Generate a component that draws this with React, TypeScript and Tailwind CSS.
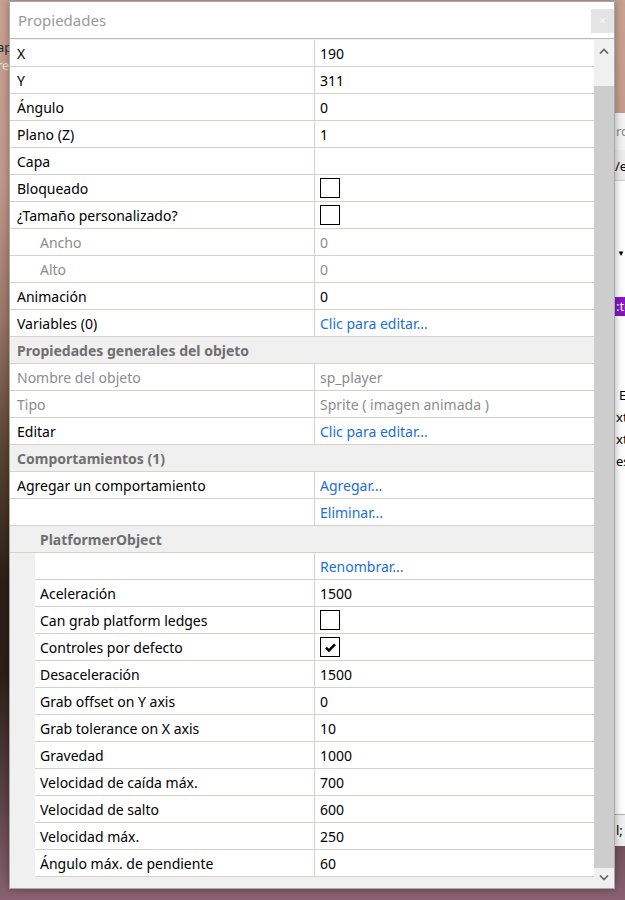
import type { ReactNode } from "react"

type Row =
  | { kind: "row"; label: string; value?: ReactNode; muted?: boolean; indent?: boolean }
  | { kind: "header"; label: string }

const link = (t: string) => <span className="text-[#1a6fd6]">{t}</span>

function Check({ on = false }: { on?: boolean }) {
  return (
    <span className="flex h-[20px] w-[20px] items-center justify-center border border-black bg-white">
      {on && (
        <svg width="11" height="9" viewBox="0 0 12 10">
          <path d="M1 5.2 L4.2 8.4 L11 1.6" fill="none" stroke="#000" strokeWidth="2.8" />
        </svg>
      )}
    </span>
  )
}

const mainRows: Row[] = [
  { kind: "row", label: "X", value: "190" },
  { kind: "row", label: "Y", value: "311" },
  { kind: "row", label: "Ángulo", value: "0" },
  { kind: "row", label: "Plano (Z)", value: "1" },
  { kind: "row", label: "Capa" },
  { kind: "row", label: "Bloqueado", value: <Check /> },
  { kind: "row", label: "¿Tamaño personalizado?", value: <Check /> },
  { kind: "row", label: "Ancho", value: "0", muted: true, indent: true },
  { kind: "row", label: "Alto", value: "0", muted: true, indent: true },
  { kind: "row", label: "Animación", value: "0" },
  { kind: "row", label: "Variables (0)", value: link("Clic para editar...") },
  { kind: "header", label: "Propiedades generales del objeto" },
  { kind: "row", label: "Nombre del objeto", value: "sp_player", muted: true },
  { kind: "row", label: "Tipo", value: "Sprite ( imagen animada )", muted: true },
  { kind: "row", label: "Editar", value: link("Clic para editar...") },
  { kind: "header", label: "Comportamientos (1)" },
  { kind: "row", label: "Agregar un comportamiento", value: link("Agregar...") },
  { kind: "row", label: "", value: link("Eliminar...") },
]

const behaviorRows: Row[] = [
  { kind: "row", label: "", value: link("Renombrar...") },
  { kind: "row", label: "Aceleración", value: "1500" },
  { kind: "row", label: "Can grab platform ledges", value: <Check /> },
  { kind: "row", label: "Controles por defecto", value: <Check on /> },
  { kind: "row", label: "Desaceleración", value: "1500" },
  { kind: "row", label: "Grab offset on Y axis", value: "0" },
  { kind: "row", label: "Grab tolerance on X axis", value: "10" },
  { kind: "row", label: "Gravedad", value: "1000" },
  { kind: "row", label: "Velocidad de caída máx.", value: "700" },
  { kind: "row", label: "Velocidad de salto", value: "600" },
  { kind: "row", label: "Velocidad máx.", value: "250" },
  { kind: "row", label: "Ángulo máx. de pendiente", value: "60" },
]

function GridRow({ row, nested = false }: { row: Row; nested?: boolean }) {
  if (row.kind === "header") {
    return (
      <div className="flex h-[27px] items-center border-b border-[#d6d2ca] bg-[#f0f0f0] pl-[7px] font-bold text-[#6f6f6f]">
        {row.label}
      </div>
    )
  }
  return (
    <div className={`flex h-[27px] border-b border-[#d6d2ca] bg-white ${nested ? "ml-[25px]" : ""}`}>
      <div
        className={`flex shrink-0 items-center border-r border-[#d6d2ca] ${nested ? "w-[280px] pl-[5px]" : "w-[305px]"} ${
          row.indent ? "pl-[30px]" : nested ? "" : "pl-[7px]"
        } ${row.muted ? "text-[#8c8c8c]" : "text-black"}`}
      >
        {row.label}
      </div>
      <div className={`flex flex-1 items-center pl-[5px] ${row.muted ? "text-[#8c8c8c]" : "text-black"}`}>
        {row.value}
      </div>
    </div>
  )
}

function Chevron({ up }: { up?: boolean }) {
  return (
    <svg width="10" height="6" viewBox="0 0 10 6">
      <path d={up ? "M1 5.5 L5 1.5 L9 5.5" : "M1 0.5 L5 4.5 L9 0.5"} fill="none" stroke="#606060" strokeWidth="1.6" />
    </svg>
  )
}

export default function App() {
  return (
    <div className="relative h-[900px] w-[625px] overflow-hidden bg-[linear-gradient(180deg,#c9a291_0%,#c29a8c_20%,#9c7868_35%,#5a4430_50%,#2a2016_65%,#2c2018_75%,#5a4045_88%,#8a6272_100%)] font-['Segoe_UI','Noto_Sans',sans-serif] text-[14px]">
      {/* desktop window behind, left edge */}
      <div className="absolute -left-[3px] top-[40px] flex flex-col gap-[4px] text-[13px] leading-[14px]">
        <span className="text-[#1e2a3a]">ap</span>
        <span className="text-[#eee6e4]">re</span>
      </div>

      {/* window behind on the right */}
      <div className="absolute left-[600px] top-[113px] flex h-[733px] w-[40px] flex-col border-l border-[#a8a8a8] bg-white text-[13px]">
        <div className="flex h-[37px] items-center bg-[#f3f3f3] pl-[15px] text-[#8a8a8a]">rc</div>
        <div className="flex h-[31px] items-end border-b border-[#cfcfcf] bg-[#ececec] pb-[4px] pl-[14px] text-black">/e</div>
        <div className="flex h-[80px] items-end pb-[2px] pl-[16px] text-[8px] text-black">▼</div>
        <div className="ml-[14px] mt-[36px] flex h-[19px] w-[20px] items-center bg-[#8a14c8] pl-[1px] text-white">:to</div>
        <div className="mt-[68px] pl-[18px] leading-[22px] text-black">
          <div>E</div>
          <div className="-ml-[3px]">xt</div>
          <div className="-ml-[3px]">xt</div>
          <div className="-ml-[3px]">es</div>
        </div>
        <div className="mt-auto flex h-[32px] items-center border-t border-[#b0b0b0] bg-[#f0f0f0] pl-[15px] text-black">l;</div>
      </div>

      {/* properties window */}
      <div className="absolute left-[9px] top-[1px] flex h-[888px] w-[606px] flex-col border border-[#a9a9a9] bg-white shadow-[0_0_8px_rgba(0,0,0,0.35)]">
        <div className="relative flex h-[37px] shrink-0 items-center border-b border-[#bcbcbc] pl-[8px] text-[15px] text-[#9a9a9a]">
          Propiedades
          <div className="absolute right-0 top-[7px] flex h-[24px] w-[23px] items-center justify-center bg-[#e4e4e4] text-[13px] text-[#f8f8f8]">
            ×
          </div>
        </div>
        <div className="flex min-h-0 flex-1">
          <div className="flex w-[584px] flex-col bg-[#f0f0f0] pt-[1px]">
            {mainRows.map((r, i) => (
              <GridRow key={i} row={r} />
            ))}
            <div className="flex h-[27px] items-center border-b border-[#d6d2ca] bg-[#f0f0f0] pl-[30px] font-bold text-[#6f6f6f]">
              PlatformerObject
            </div>
            {behaviorRows.map((r, i) => (
              <GridRow key={i} row={r} nested />
            ))}
          </div>
          <div className="flex w-[20px] flex-col bg-[#f0f0f0]">
            <div className="flex h-[47px] justify-center pt-[9px]">
              <Chevron up />
            </div>
            <div className="flex-1 bg-[#cdcdcd]" />
            <div className="flex h-[20px] items-center justify-center">
              <Chevron />
            </div>
          </div>
        </div>
      </div>
    </div>
  )
}
